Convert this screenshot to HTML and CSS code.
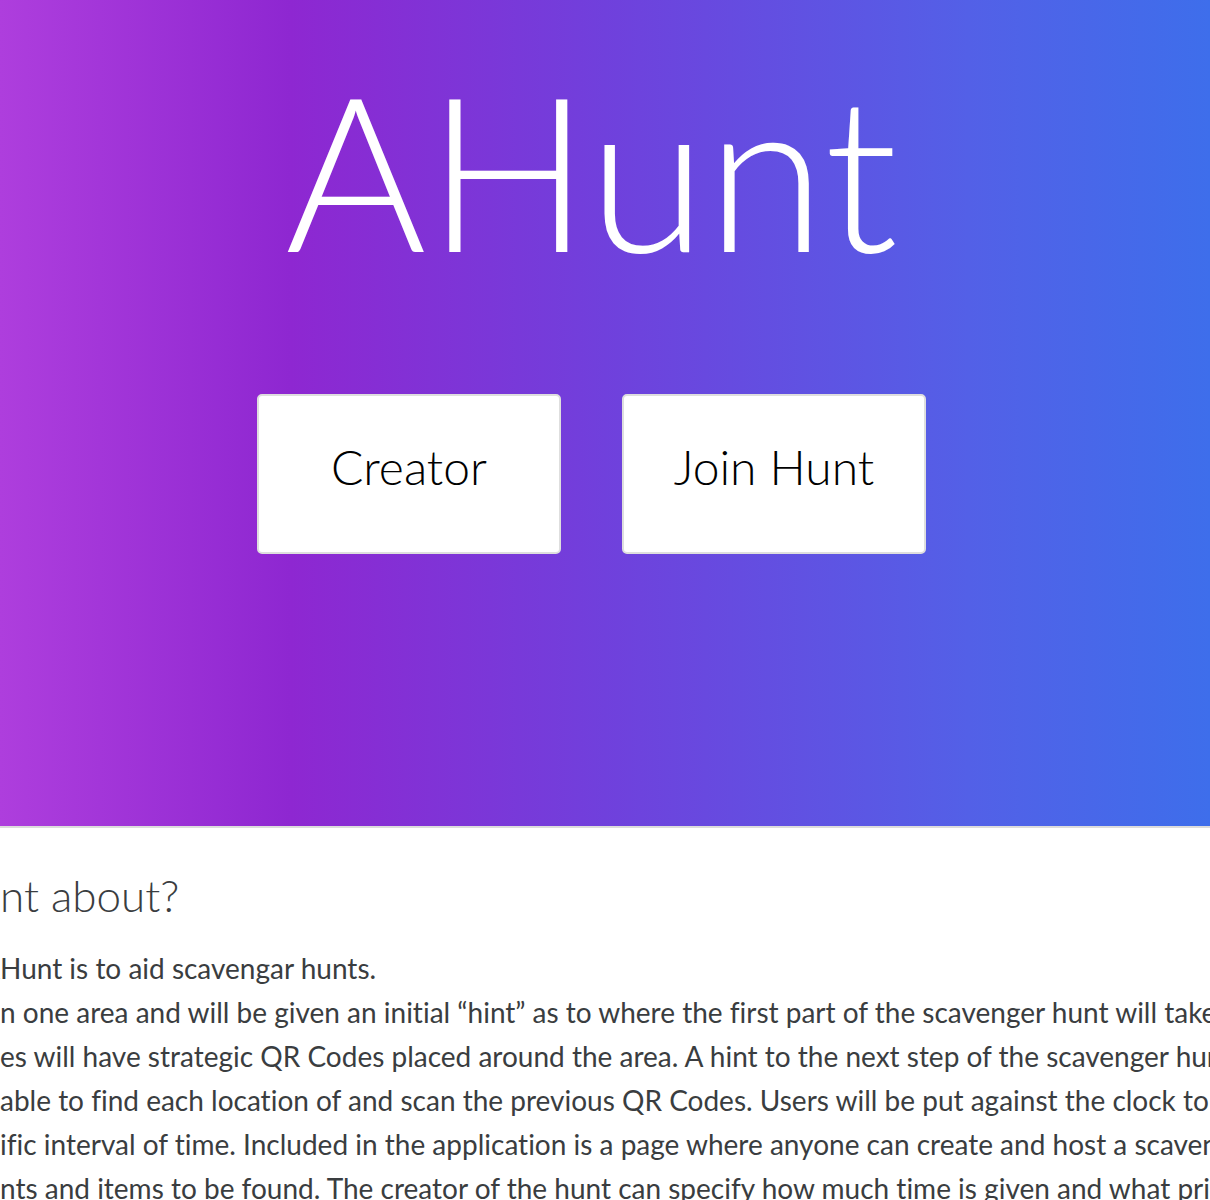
FILE: index.html
```html
<!DOCTYPE html>
<html lang="en">
<head>
<meta charset="utf-8">
<title>AHunt</title>
<link rel="stylesheet" href="styles.css">
</head>
<body>
<header class="hero">
  <h1 class="hero-title">AHunt</h1>
  <nav class="hero-actions">
    <a class="hero-btn" href="#">Creator</a>
    <a class="hero-btn" href="#">Join Hunt</a>
  </nav>
</header>
<main class="about">
  <h2 class="about-title"><span class="lead-in">What is AHu</span>nt about?</h2>
  <p class="about-text">
    <span class="about-line"><span class="lead-in">The purpose of A</span>Hunt is to aid scavengar hunts.</span>
    <span class="about-line"><span class="lead-in">Users will start i</span>n one area and will be given an initial “hint” as to where the first part of the scavenger hunt will take place.</span>
    <span class="about-line"><span class="lead-in">These hunt sit</span>es will have strategic QR Codes placed around the area. A hint to the next step of the scavenger hunt will be revealed</span>
    <span class="about-line"><span class="lead-in">once users are </span>able to find each location of and scan the previous QR Codes. Users will be put against the clock to finish</span>
    <span class="about-line"><span class="lead-in">the hunt within a spec</span>ific interval of time. Included in the application is a page where anyone can create and host a scavenger hunt</span>
    <span class="about-line"><span class="lead-in">with their own hi</span>nts and items to be found. The creator of the hunt can specify how much time is given and what prizes await.</span>
  </p>
</main>
</body>
</html>
```
FILE: styles.css
```css
html, body {
  margin: 0;
  overflow: hidden;
}

body {
  font-family: Lato, "Open Sans", sans-serif;
  font-variant-ligatures: none;
  background: #fff;
  color: #3a3d40;
}

.hero {
  box-sizing: border-box;
  height: 828px;
  padding-right: 27px;
  border-bottom: 2px solid #dcdcdc;
  background: linear-gradient(to right, #ae3edd 0%, #8e27d1 24%, #7040dc 50%, #5360e7 80%, #3e6eeb 100%);
  display: flex;
  flex-direction: column;
  align-items: center;
}

.hero-title {
  margin: 61px 0 0;
  font-size: 216px;
  font-weight: 300;
  line-height: 1;
  color: #fff;
}

.hero-actions {
  display: flex;
  gap: 61px;
  margin-top: 117px;
}

.hero-btn {
  box-sizing: border-box;
  width: 304px;
  height: 160px;
  padding-top: 47px;
  border: 2px solid #dedede;
  border-radius: 5px;
  background: #fff;
  color: #000;
  font-size: 48px;
  font-weight: 300;
  line-height: 1;
  text-align: center;
  text-decoration: none;
}

.about {
  margin-left: -400px;
  padding-top: 41px;
}

.lead-in {
  display: inline-block;
  width: 400px;
  text-align: right;
}

.about-title {
  margin: 0;
  font-size: 44px;
  font-weight: 300;
  line-height: normal;
  white-space: nowrap;
}

.about-text {
  margin: 25px 0 0;
  font-size: 28px;
  line-height: 44px;
  white-space: nowrap;
}

.about-line {
  display: block;
}
```
